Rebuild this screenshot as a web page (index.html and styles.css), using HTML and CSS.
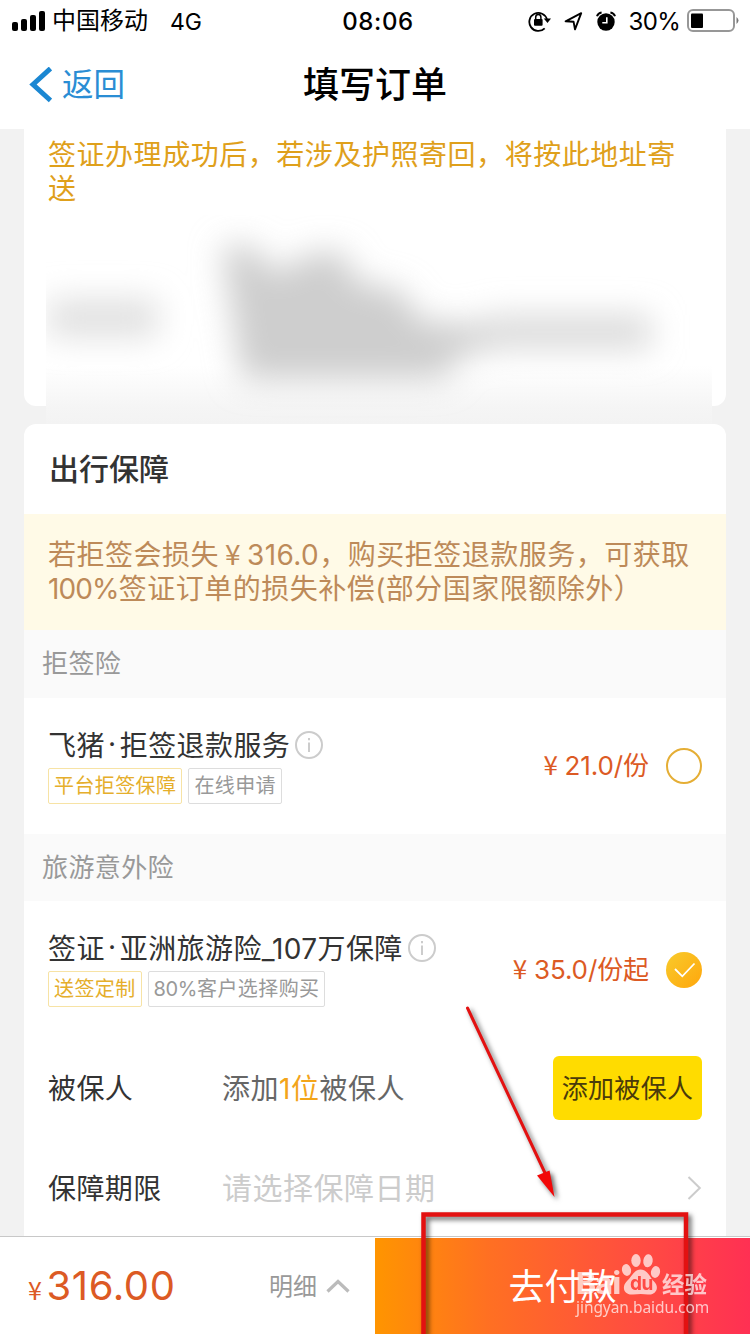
FILE: index.html
```html
<!DOCTYPE html>
<html lang="zh-CN">
<head>
<meta charset="utf-8">
<title>填写订单</title>
<link rel="stylesheet" href="styles.css">
</head>
<body>
<div class="screen">
  <header class="top">
    <div class="status">
      <div class="status-left">
        <svg class="signal" width="34" height="22" viewBox="0 0 34 22"><rect x="0" y="12" width="6" height="9" rx="2"/><rect x="9" y="9" width="6" height="12" rx="2"/><rect x="18" y="5" width="6" height="16" rx="2"/><rect x="27" y="1" width="6" height="20" rx="2"/></svg>
        <span class="carrier">中国移动</span>
        <span class="network">4G</span>
      </div>
      <div class="clock">08:06</div>
      <div class="status-right">
        <svg width="24" height="22" viewBox="0 0 24 22"><path d="M16.700 18.300A9 9 0 1 1 19 9.500" fill="none" stroke="#000" stroke-width="1.800"/><path d="M15.800 8.600h7.200l-3.500 4.300z"/><rect x="6" y="9" width="8.600" height="6.800" rx="1"/><path d="M7.700 9V7.200a2.600 2.600 0 0 1 5.200 0V9" fill="none" stroke="#000" stroke-width="1.500"/></svg>
        <svg class="locate" width="19" height="20" viewBox="0 0 19 20"><path d="M1.600 10.300L17.200 2.200L11 18.300L9.600 10.800z" fill="none" stroke="#000" stroke-width="1.900" stroke-linejoin="round"/></svg>
        <svg class="alarm" width="20" height="20" viewBox="0 0 20 20"><circle cx="10" cy="11" r="8.700"/><path d="M1 5.200Q2 2 5.600 1.500M19 5.200Q18 2 14.400 1.500" fill="none" stroke="#000" stroke-width="2"/><path d="M10.800 6.300v5.400H6.300" fill="none" stroke="#fff" stroke-width="1.600"/></svg>
        <span class="percent">30%</span>
        <svg class="battery" width="53" height="24" viewBox="0 0 53 24"><rect x="1" y="1" width="46" height="21" rx="5" fill="none" stroke="#979797" stroke-width="2"/><rect x="4" y="4.500" width="12" height="14.500" rx="1"/><path d="M49.500 8q4 3.500 0 7z" fill="#777"/></svg>
      </div>
    </div>
    <nav class="nav">
      <div class="back">
        <svg width="24" height="36" viewBox="0 0 24 36"><path d="M22.500 1.500L5 17.500L22.500 33.500" fill="none" stroke="#1b87d2" stroke-width="5"/></svg>
        <span>返回</span>
      </div>
      <h1 class="nav-title">填写订单</h1>
    </nav>
  </header>

  <main class="content">
    <section class="card address">
      <p class="address-note">签证办理成功后，若涉及护照寄回，将按此地址寄送</p>
      <svg class="redacted" width="666" height="209" viewBox="0 0 666 209">
        <defs>
          <filter id="soft" x="-30%" y="-50%" width="160%" height="200%"><feGaussianBlur stdDeviation="16"/></filter>
          <linearGradient id="fade" x1="0" y1="0" x2="0" y2="1"><stop offset="0.72" stop-color="#fff"/><stop offset="0.92" stop-color="#f5f5f5"/><stop offset="1" stop-color="#f3f3f3"/></linearGradient>
        </defs>
        <rect width="666" height="209" fill="url(#fade)"/>
        <g filter="url(#soft)">
          <path d="M2 84H112V122H2z" fill="#e0e0e0"/>
          <path d="M176 32L206 30L228 58L272 36L300 40L308 66L355 76L375 106L450 110L450 134L412 140L400 164H196z" fill="#cecece"/>
          <path d="M440 100H605V134H440z" fill="#dadada"/>
        </g>
      </svg>
    </section>

    <section class="card protection">
      <h2 class="card-title">出行保障</h2>
      <div class="notice">若拒签会损失<span class="yen">¥</span><span class="amount">316.0</span>，购买拒签退款服务，可获取<br><span class="amount-full">100%</span>签证订单的损失补偿(部分国家限额除外）</div>
      <h3 class="group">拒签险</h3>
      <div class="product">
        <div class="product-main">
          <div class="product-name">飞猪<span class="dot">·</span>拒签退款服务<svg class="info" width="28" height="28" viewBox="0 0 28 28"><circle cx="14" cy="14" r="13"/><path d="M14 11.500V21M14 7V9.200"/></svg></div>
          <div class="tags"><span class="tag tag-gold">平台拒签保障</span><span class="tag">在线申请</span></div>
        </div>
        <div class="price"><span class="yen">¥</span>21.0/份</div>
        <svg class="radio" width="36" height="36" viewBox="0 0 36 36"><circle cx="18" cy="18" r="17" fill="#fff" stroke="#e5ae35" stroke-width="2"/></svg>
      </div>
      <h3 class="group group-travel">旅游意外险</h3>
      <div class="product product-travel">
        <div class="product-main">
          <div class="product-name">签证<span class="dot">·</span>亚洲旅游险_107万保障<svg class="info" width="28" height="28" viewBox="0 0 28 28"><circle cx="14" cy="14" r="13"/><path d="M14 11.500V21M14 7V9.200"/></svg></div>
          <div class="tags"><span class="tag tag-gold">送签定制</span><span class="tag"><span class="share">80%</span>客户选择购买</span></div>
        </div>
        <div class="price"><span class="yen">¥</span>35.0/份起</div>
        <svg class="radio" width="36" height="36" viewBox="0 0 36 36"><defs><linearGradient id="gold" x1="0" y1="0" x2="1" y2="1"><stop stop-color="#f8cb2c"/><stop offset="1" stop-color="#ffa60c"/></linearGradient></defs><circle cx="18" cy="18" r="18" fill="url(#gold)"/><path d="M9 17L16.300 24.300L28.500 11.500" fill="none" stroke="#fff" stroke-width="1.800"/></svg>
      </div>
      <div class="field">
        <span class="label">被保人</span>
        <span class="value">添加<em>1位</em>被保人</span>
        <button class="add">添加被保人</button>
      </div>
      <div class="field">
        <span class="label">保障期限</span>
        <span class="value placeholder">请选择保障日期</span>
        <svg class="chevron" width="15" height="26" viewBox="0 0 15 26"><path d="M1.500 2L12.800 13L1.500 24" fill="none" stroke="#ccc" stroke-width="2"/></svg>
      </div>
    </section>
  </main>

  <footer class="bar">
    <div class="summary">
      <div class="total"><small>¥</small>316.00</div>
      <div class="detail"><span>明细</span><svg width="24" height="14" viewBox="0 0 24 14"><path d="M1.500 12.500L12 2.500L22.500 12.500" fill="none" stroke="#bbb" stroke-width="3.200"/></svg></div>
    </div>
    <button class="pay">去付款</button>
  </footer>

  <svg class="annotation" width="750" height="1334" viewBox="0 0 750 1334">
    <path d="M467.500 1008L545 1173" stroke="#e31111" stroke-width="3" stroke-linecap="round"/>
    <path d="M537 1175.500L549.500 1170.500L554.500 1197z" fill="#f20808"/>
    <path d="M423.500 1340V1214.500H686V1340" fill="none" stroke="#e31111" stroke-width="4.500"/>
  </svg>

  <div class="watermark">
    <div class="brand">
      <span class="brand-bai">Bai</span>
      <span class="paw"><svg width="40" height="43" viewBox="0 0 40 43"><ellipse cx="5.500" cy="17" rx="4.500" ry="6" transform="rotate(-12 5.500 17)"/><ellipse cx="15" cy="7.500" rx="4.700" ry="6.500"/><ellipse cx="27" cy="7.800" rx="4.700" ry="6.500" transform="rotate(8 27 7.800)"/><ellipse cx="34.500" cy="19" rx="4.500" ry="6" transform="rotate(12 34.500 19)"/><path d="M19.500 16.500C27 16.500 29 25 33 28.500C39 34 35 42.500 27 41.500Q20 40.500 12 41.500C3 42.500 0 34 6 28C11 23.500 13 16.500 19.500 16.500z"/></svg><b>du</b></span>
      <span class="brand-jy">经验</span>
    </div>
    <div class="site">jingyan.baidu.com</div>
  </div>
</div>
</body>
</html>
```

FILE: styles.css
```css
* { box-sizing: border-box; }
body { margin: 0; font-family: Inter, "Noto Sans CJK SC", sans-serif; }
h1, h2, h3, p { margin: 0; font-weight: 400; }
button { border: 0; padding: 0; font-family: inherit; }
svg { display: block; flex: none; }

.screen {
  position: relative;
  display: flex;
  flex-direction: column;
  width: 750px;
  height: 1334px;
  overflow: hidden;
  background: #f2f2f2;
}

/* Header */
.top { flex: none; height: 129px; background: #fff; }
.status {
  display: grid;
  grid-template-columns: 1fr auto 1fr;
  align-items: center;
  height: 40px;
  padding: 0 12px;
}
.status-left, .status-right { display: flex; align-items: center; }
.status-right { justify-content: flex-end; margin-right: -2px; }
.carrier { margin-left: 6px; padding-top: 1px; font-size: 24px; line-height: 40px; }
.network { margin-left: 22px; padding-top: 2px; font-size: 23px; }
.clock { margin-left: 6px; padding-top: 1px; font-size: 24px; font-weight: 500; letter-spacing: 0.6px; }
.locate { margin-left: 12px; }
.alarm { margin-left: 13px; }
.percent { margin-left: 13px; padding-top: 1px; font-size: 24px; letter-spacing: -0.7px; }
.battery { margin-left: 7px; }

.nav {
  display: grid;
  grid-template-columns: 1fr auto 1fr;
  align-items: center;
  height: 89px;
}
.back {
  display: flex;
  align-items: center;
  gap: 10px;
  padding-left: 28px;
  color: #2a8dd4;
  font-size: 31.500px;
  line-height: 89px;
}
.nav-title { padding-bottom: 5px; font-size: 36px; font-weight: 500; color: #000; }

/* Cards */
.content { flex: 1; min-height: 0; overflow: hidden; padding: 0 24px; }
.card { background: #fff; }
.address { height: 277px; padding: 9px 24px 0; border-radius: 0 0 12px 12px; }
.address-note {
  color: #dfa01b;
  font-size: 28px;
  line-height: 34px;
  letter-spacing: 0.54px;
}
.redacted { margin: 9px 0 0 -2px; }
.protection { margin-top: 18px; border-radius: 12px 12px 0 0; }
.card-title {
  height: 90px;
  padding-left: 25px;
  font-size: 30px;
  font-weight: 500;
  line-height: 90px;
  color: #333;
}
.notice {
  height: 116px;
  padding: 24px 0 0 24px;
  background: #fffae7;
  color: #bd8a59;
  font-size: 28px;
  line-height: 34px;
  letter-spacing: 0.5px;
  white-space: nowrap;
}
.amount { letter-spacing: 0.4px; }
.amount-full { letter-spacing: -0.9px; }
.yen { display: inline-block; width: 28px; text-align: center; font-family: "Noto Sans CJK SC", sans-serif; line-height: 1; }
.group {
  height: 68px;
  padding-left: 18px;
  background: #fafafa;
  color: #999;
  font-size: 26px;
  line-height: 68px;
  letter-spacing: 0.4px;
}
.group-travel { height: 67px; }
.product {
  display: flex;
  align-items: center;
  height: 136px;
  padding: 0 24px;
}
.product-travel { height: 137px; }
.product-main { flex: 1; padding-bottom: 2px; }
.product-name {
  display: flex;
  align-items: center;
  height: 34px;
  color: #333;
  font-size: 28px;
  letter-spacing: 0.4px;
  white-space: nowrap;
}
.dot { width: 15px; text-align: center; }
.info { margin: 2px 0 0 5px; fill: none; stroke: #ccc; stroke-width: 2; }
.tags { display: flex; gap: 6px; margin-top: 7px; }
.tag {
  height: 36px;
  padding: 0 5px;
  border: 1px solid #ddd;
  border-radius: 2px;
  color: #999;
  font-size: 20px;
  line-height: 34px;
  letter-spacing: 0.4px;
}
.share { letter-spacing: -0.4px; }
.tag-gold { border-color: #f7e3a5; color: #e5ae2b; }
.price { padding-bottom: 5px; color: #dc5a24; font-size: 26px; letter-spacing: -0.1px; white-space: nowrap; }
.radio { margin-left: 17px; }
.field {
  display: flex;
  align-items: center;
  height: 100px;
  padding: 0 24px;
  color: #333;
  font-size: 28px;
}
.label { width: 174px; padding-bottom: 3px; letter-spacing: 0.4px; }
.value { flex: 1; padding-bottom: 3px; color: #666; letter-spacing: 0.5px; }
.value em { color: #f3a51a; font-style: normal; }
.placeholder { padding-bottom: 4px; color: #ccc; font-size: 30px; }
.add {
  width: 149px;
  height: 64px;
  padding-bottom: 4px;
  border-radius: 6px;
  background: #ffdc00;
  color: #4a3b0b;
  font-size: 26px;
  letter-spacing: 0.3px;
}

/* Checkout bar */
.bar {
  display: flex;
  flex: none;
  height: 98px;
  border-top: 1px solid #c8c8c8;
  background: #fff;
}
.summary {
  display: flex;
  align-items: center;
  justify-content: space-between;
  width: 375px;
  padding: 0 25px 0 28px;
}
.total { color: #dc5a24; font-size: 40px; letter-spacing: 0.6px; }
.total small { margin-right: 4px; font-family: "Noto Sans CJK SC", sans-serif; font-size: 25px; }
.detail { display: flex; align-items: center; gap: 9px; color: #999; font-size: 24px; }
.detail span { padding-bottom: 3px; }
.pay {
  flex: 1;
  margin-top: 1px;
  padding-bottom: 4px;
  background: linear-gradient(90deg, #ff9500, #ff7022 30%, #ff4b42 72%, #ff3053);
  color: #fff;
  font-size: 36px;
}

/* Overlays */
.annotation {
  position: absolute;
  top: 0;
  left: 0;
  filter: drop-shadow(3px 3px 2.500px rgba(0, 0, 0, 0.6));
}
.watermark {
  position: absolute;
  left: 576px;
  top: 1253px;
  color: #fff;
  fill: #fff;
  opacity: 0.7;
}
.brand { display: flex; align-items: flex-end; height: 43px; white-space: nowrap; }
.brand-bai { width: 45px; font-size: 30px; font-weight: 800; line-height: 26px; letter-spacing: -0.6px; }
.brand-jy { margin-left: 1px; font-size: 22.500px; font-weight: 700; line-height: 23px; }
.paw { position: relative; }
.paw b {
  position: absolute;
  left: 9px;
  bottom: 2px;
  color: #ff4a45;
  font-size: 19px;
  line-height: 20px;
  letter-spacing: -0.5px;
}
.site { font-family: "Noto Sans", sans-serif; font-size: 15.500px; line-height: 23px; letter-spacing: -0.06px; }
```
